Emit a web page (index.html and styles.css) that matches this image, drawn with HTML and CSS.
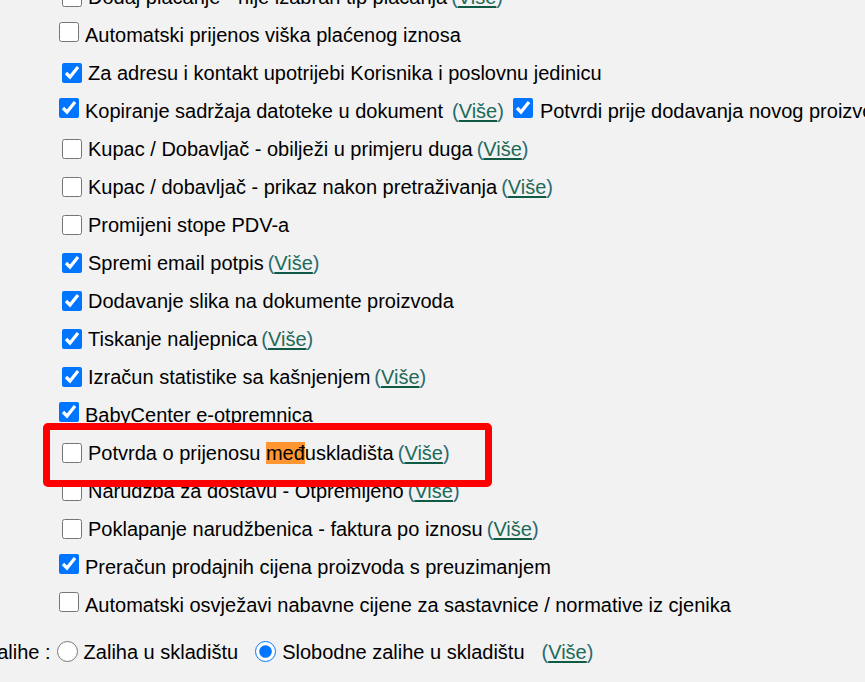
FILE: index.html
```html
<!DOCTYPE html>
<html lang="hr">
<head>
    <meta charset="UTF-8">
    <title>Postavke</title>
    <link rel="stylesheet" href="styles.css">
</head>
<body>
    <div class="settings">
        <div class="row row-b">
            <input type="checkbox">
            <span>Dodaj plaćanje - nije izabran tip plaćanja</span>
            <span class="more">(<a href="#">Više</a>)</span>
        </div>
        <div class="row row-a">
            <input type="checkbox">
            <span>Automatski prijenos viška plaćenog iznosa</span>
        </div>
        <div class="row row-b">
            <input type="checkbox" checked>
            <span>Za adresu i kontakt upotrijebi Korisnika i poslovnu jedinicu</span>
        </div>
        <div class="row row-a">
            <input type="checkbox" checked>
            <span>Kopiranje sadržaja datoteke u dokument</span>
            <span class="more spaced">(<a href="#">Više</a>)</span>
            <input type="checkbox" class="inline-check" checked>
            <span>Potvrdi prije dodavanja novog proizvoda</span>
        </div>
        <div class="row row-b">
            <input type="checkbox">
            <span>Kupac / Dobavljač - obilježi u primjeru duga</span>
            <span class="more">(<a href="#">Više</a>)</span>
        </div>
        <div class="row row-b">
            <input type="checkbox">
            <span>Kupac / dobavljač - prikaz nakon pretraživanja</span>
            <span class="more">(<a href="#">Više</a>)</span>
        </div>
        <div class="row row-b">
            <input type="checkbox">
            <span>Promijeni stope PDV-a</span>
        </div>
        <div class="row row-b">
            <input type="checkbox" checked>
            <span>Spremi email potpis</span>
            <span class="more">(<a href="#">Više</a>)</span>
        </div>
        <div class="row row-b">
            <input type="checkbox" checked>
            <span>Dodavanje slika na dokumente proizvoda</span>
        </div>
        <div class="row row-b">
            <input type="checkbox" checked>
            <span>Tiskanje naljepnica</span>
            <span class="more">(<a href="#">Više</a>)</span>
        </div>
        <div class="row row-b">
            <input type="checkbox" checked>
            <span>Izračun statistike sa kašnjenjem</span>
            <span class="more">(<a href="#">Više</a>)</span>
        </div>
        <div class="row row-a">
            <input type="checkbox" checked>
            <span>BabyCenter e-otpremnica</span>
        </div>
        <div class="row row-b">
            <input type="checkbox">
            <span>Potvrda o prijenosu <mark class="found">međ</mark>uskladišta</span>
            <span class="more">(<a href="#">Više</a>)</span>
        </div>
        <div class="row row-b">
            <input type="checkbox">
            <span>Narudzba za dostavu - Otpremljeno</span>
            <span class="more">(<a href="#">Više</a>)</span>
        </div>
        <div class="row row-b">
            <input type="checkbox">
            <span>Poklapanje narudžbenica - faktura po iznosu</span>
            <span class="more">(<a href="#">Više</a>)</span>
        </div>
        <div class="row row-a">
            <input type="checkbox" checked>
            <span>Preračun prodajnih cijena proizvoda s preuzimanjem</span>
        </div>
        <div class="row row-a">
            <input type="checkbox">
            <span>Automatski osvježavi nabavne cijene za sastavnice / normative iz cjenika</span>
        </div>

        <div class="row radio-row">
            <span class="radio-label">Zalihe :</span>
            <input type="radio" name="stock">
            <span>Zaliha u skladištu</span>
            <input type="radio" name="stock" class="second-radio" checked>
            <span>Slobodne zalihe u skladištu</span>
            <span class="more radio-more">(<a href="#">Više</a>)</span>
        </div>

        <!-- annotation frame -->
        <div class="highlight-box"></div>
    </div>
</body>
</html>
```

FILE: styles.css
```css
* {
    margin: 0;
    padding: 0;
    box-sizing: border-box;
}

body {
    background: #f2f2f2;
    color: #000;
    font-family: "Liberation Sans", Arial, sans-serif;
    font-size: 20px;
    overflow: hidden;
}

.settings {
    position: relative;
    margin-top: -22px;
}

.row {
    display: flex;
    align-items: center;
    height: 38px;
    white-space: nowrap;
}

.row input[type="checkbox"] {
    width: 20px;
    height: 20px;
    flex-shrink: 0;
}

.row-a input[type="checkbox"] {
    margin: 0 6px 6px 59px;
}

.row-b input[type="checkbox"] {
    margin: 0 6px 0 62px;
}

.row-a input.inline-check {
    margin: 0 7px 6px 9px;
}

.more {
    color: #2b6a72;
    margin-left: 4px;
}

.more.spaced {
    margin-left: 9px;
}

.more a {
    color: #1d6a58;
    text-decoration: underline;
    text-decoration-color: #0f5a45;
    text-underline-offset: 2px;
}

.found {
    background: #ff9632;
    color: #000;
}

.radio-row {
    margin-top: 9px;
}

.radio-label {
    margin-left: -15px;
}

.radio-row input[type="radio"] {
    width: 21px;
    height: 21px;
    margin: 0 6px 2px 6px;
    flex-shrink: 0;
}

.radio-row input.second-radio {
    margin-left: 17px;
}

.radio-more {
    margin-left: 17px;
}

.highlight-box {
    position: absolute;
    left: 43px;
    top: 445px;
    width: 449px;
    height: 64px;
    border: 7px solid #ff0000;
    border-radius: 5px;
    pointer-events: none;
}
```
